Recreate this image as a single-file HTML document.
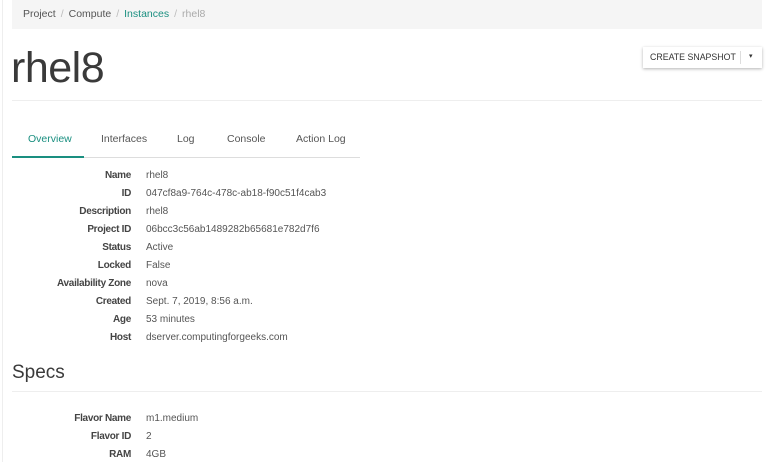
<!DOCTYPE html>
<html><head><style>
body{margin:0;width:768px;height:462px;overflow:hidden;background:#fff;font-family:"Liberation Sans",sans-serif;color:#333;position:relative}
.lb{position:absolute;left:2px;top:0;width:1px;height:462px;background:#eee}
.bc{position:absolute;left:12px;top:0;width:750px;height:29px;background:#f5f5f5;font-size:10.5px;line-height:29px;color:#555;padding-left:11px;box-sizing:border-box;white-space:nowrap}
.bc .s{color:#bbb;padding:0 5px}
h1{position:absolute;left:11px;top:38px;margin:0;font-weight:normal;font-size:43px;line-height:60px;color:#3a3a3a;letter-spacing:-0.5px}
.hr{position:absolute;left:12px;height:1px;background:#eee;width:750px}
.btn{position:absolute;left:643px;top:47px;width:119px;height:21px;background:#fff;box-shadow:0 1px 3px rgba(0,0,0,.3);font-size:8.8px;line-height:21px;color:#333}
.tab{position:absolute;top:133px;font-size:10.5px;color:#555}
.row{position:absolute;left:0;width:400px;height:14px;font-size:10px;line-height:14px}
.row b{position:absolute;left:0;width:131px;text-align:right;color:#444;letter-spacing:-0.3px}
.row i{position:absolute;left:146px;font-style:normal;color:#555;white-space:nowrap}
</style></head><body>
<div class="lb"></div>
<div class="bc">Project<span class="s">/</span>Compute<span class="s">/</span><span style="color:#1a8f80">Instances</span><span class="s">/</span><span style="color:#aaa">rhel8</span></div>
<h1>rhel8</h1>
<div class="btn"><span style="position:absolute;left:7px">CREATE SNAPSHOT</span><span style="position:absolute;left:97px;top:4px;width:1px;height:13px;background:#ddd"></span><span style="position:absolute;left:106px;top:-1px;font-size:7px">▾</span></div>
<div class="hr" style="top:100px"></div>
<div class="tab" style="left:28px;color:#1a8f80">Overview</div>
<div class="tab" style="left:101px">Interfaces</div>
<div class="tab" style="left:177px">Log</div>
<div class="tab" style="left:227px">Console</div>
<div class="tab" style="left:296px">Action Log</div>
<div style="position:absolute;left:12px;top:157px;width:348px;height:1px;background:#ddd"></div>
<div style="position:absolute;left:12px;top:156px;width:72px;height:2px;background:#1a8f80"></div>
<div class="row" style="top:169px"><b>Name</b><i>rhel8</i></div>
<div class="row" style="top:187px"><b>ID</b><i>047cf8a9-764c-478c-ab18-f90c51f4cab3</i></div>
<div class="row" style="top:205px"><b>Description</b><i>rhel8</i></div>
<div class="row" style="top:223px"><b>Project ID</b><i>06bcc3c56ab1489282b65681e782d7f6</i></div>
<div class="row" style="top:241px"><b>Status</b><i>Active</i></div>
<div class="row" style="top:259px"><b>Locked</b><i>False</i></div>
<div class="row" style="top:277px"><b>Availability Zone</b><i>nova</i></div>
<div class="row" style="top:295px"><b>Created</b><i>Sept. 7, 2019, 8:56 a.m.</i></div>
<div class="row" style="top:313px"><b>Age</b><i>53 minutes</i></div>
<div class="row" style="top:331px"><b>Host</b><i>dserver.computingforgeeks.com</i></div>
<div style="position:absolute;left:12px;top:362px;font-size:19px;color:#3a3a3a">Specs</div>
<div class="hr" style="top:391px"></div>
<div class="row" style="top:412px"><b>Flavor Name</b><i>m1.medium</i></div>
<div class="row" style="top:430px"><b>Flavor ID</b><i>2</i></div>
<div class="row" style="top:448px"><b>RAM</b><i>4GB</i></div>
</body></html>
